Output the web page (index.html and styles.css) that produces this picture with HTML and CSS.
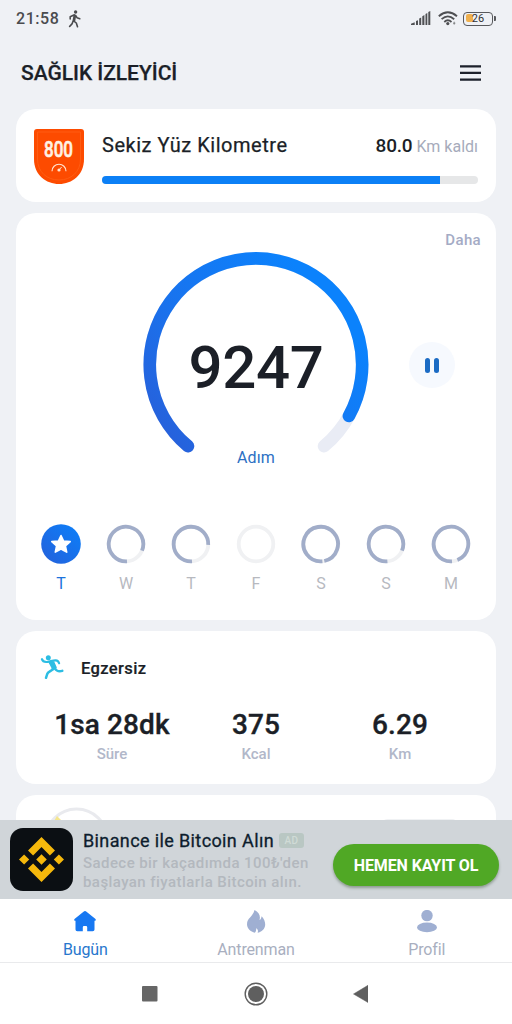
FILE: index.html
```html
<!DOCTYPE html>
<html lang="tr">
<head>
<meta charset="utf-8">
<title>Sağlık İzleyici</title>
<link rel="stylesheet" href="styles.css">
</head>
<body>
<div class="screen">
  <div class="status">
    <span class="clock">21:58</span>
    <svg class="walk" width="14" height="18" viewBox="0 0 14 18" fill="none" stroke="#4a4b4e" stroke-width="1.6" stroke-linecap="round" stroke-linejoin="round"><circle cx="7.6" cy="2" r="1.7" fill="#4a4b4e" stroke="none"/><path d="M2.2 9V6.7L6.4 4.8L5.3 10.6L8.3 13L9.5 16.7M5.2 10.8L4.2 13.6L1.6 16.5M7.6 5.4L9 7.7L11.8 8.7M7.3 5.5L6.6 10.5"/></svg>
    <svg class="signal" width="20" height="15" viewBox="0 0 20 15" fill="#4f5053"><path d="M0 14V12.7L3.7 11.3V14zM5 14V10.1L7 9.3V14zM8.2 14V7.5L10.2 6.5V14zM11.3 14V5.2L13.4 4V14zM14.5 14V3L16.3 1.9V14zM17.3 14V1L19.3 0V14z"/></svg>
    <svg class="wifi" width="20" height="15" viewBox="0 0 20 15" fill="none" stroke="#4f5053" stroke-width="1.8"><path d="M.8 5.2Q9.8-2.7 19 5.2M3.6 8.2Q9.8 2.6 16.2 8.2M6.3 11Q9.8 7.6 13.5 11"/><circle cx="9.8" cy="12.6" r="1.6" fill="#4f5053" stroke="none"/><path d="M16.2 10.7v3M15 12.2h2.4" stroke-width=".6"/></svg>
    <div class="battery"><i></i><span>26</span></div>
  </div>
  <header class="header">
    <h1>SAĞLIK İZLEYİCİ</h1>
    <svg width="22" height="17" viewBox="0 0 22 17" fill="#1d212b"><path d="M0 .2h21v2.3H0zM0 6.8h21v2.3H0zM0 13.4h21v2.3H0z"/></svg>
  </header>
  <main class="cards">
    <section class="card goal">
      <svg class="badge" width="50" height="55" viewBox="0 0 50 55"><path d="M3 0H47Q50 0 50 3V30C50 46 38 55 25 55S0 46 0 30V3Q0 0 3 0Z" fill="#fd4b00"/><path d="M3.5 3H46.5V30C46.5 43 37 51 25 51S3.5 43 3.5 30Z" fill="none" stroke="#ff5c12" stroke-width="1"/><text x="10" y="28.3" textLength="29" lengthAdjust="spacingAndGlyphs" class="badge-num">800</text><path d="M18 42.2A7 7 0 0 1 32 42.2" fill="none" stroke="#ffe5d0" stroke-width="1.1"/><circle cx="25" cy="41" r="1.6" fill="#ffe5d0"/><path d="M25 41l2.6-3" stroke="#ffe5d0"/></svg>
      <div class="goal-body">
        <div class="goal-line"><span class="goal-name">Sekiz Yüz Kilometre</span><span class="left"><b>80.0</b> Km kaldı</span></div>
        <div class="bar"><i></i></div>
      </div>
    </section>
    <section class="card steps">
      <div class="more">Daha</div>
      <div class="gauge-row">
        <div class="gauge">
          <svg width="226" height="226" viewBox="143 252 226 226" fill="none" stroke-width="12.6" stroke-linecap="round"><defs><linearGradient id="g" x1="155" y1="440" x2="325" y2="300" gradientUnits="userSpaceOnUse"><stop stop-color="#285fd9"/><stop offset=".45" stop-color="#1973ee"/><stop offset="1" stop-color="#0b82fc"/></linearGradient></defs><path d="M188 446.2A106.2 106.2 0 1 1 324 446.2" stroke="#e9ecf5"/><path d="M188 446.2A106.2 106.2 0 1 1 348.9 416" stroke="url(#g)"/></svg>
          <div class="count">9247</div>
          <div class="unit">Adım</div>
        </div>
        <div class="pause"><i></i><i></i></div>
      </div>
      <div class="week">
        <div class="day on"><svg width="40" height="40" viewBox="-20 -20 40 40"><defs><linearGradient id="d" x1="0" y1="1" x2="1" y2="0"><stop stop-color="#2560da"/><stop offset="1" stop-color="#0b80fa"/></linearGradient></defs><circle r="19.8" fill="url(#d)"/><path d="M0-8.5L2.6-3L9.2-2.4L4.4 2L5.7 8.1L0 5L-5.7 8.1L-4.4 2L-9.2-2.4L-2.6-3Z" fill="#fff" stroke="#fff" stroke-width="1.6" stroke-linejoin="round"/></svg><span>T</span></div>
        <div class="day"><svg width="40" height="40" viewBox="-20 -20 40 40"><circle class="track" r="17.3"/><path class="arc" d="M1 17.3A17.3 17.3 0 1 1 16 6.6"/></svg><span>W</span></div>
        <div class="day"><svg width="40" height="40" viewBox="-20 -20 40 40"><circle class="track" r="17.3"/><path class="arc" d="M1 17.3A17.3 17.3 0 1 1 17.2 .9"/></svg><span>T</span></div>
        <div class="day"><svg width="40" height="40" viewBox="-20 -20 40 40"><circle class="track" r="17.3"/></svg><span>F</span></div>
        <div class="day"><svg width="40" height="40" viewBox="-20 -20 40 40"><circle class="track" r="17.3"/><path class="arc" d="M1.4 17.3A17.3 17.3 0 1 1 3.3 17"/></svg><span>S</span></div>
        <div class="day"><svg width="40" height="40" viewBox="-20 -20 40 40"><circle class="track" r="17.3"/><path class="arc" d="M1.4 17.3A17.3 17.3 0 1 1 16 6.6"/></svg><span>S</span></div>
        <div class="day"><svg width="40" height="40" viewBox="-20 -20 40 40"><circle class="track" r="17.3"/><path class="arc" d="M1 17.3A17.3 17.3 0 1 1 6.4 16.1"/></svg><span>M</span></div>
      </div>
    </section>
    <section class="card exercise">
      <div class="ex-title"><svg width="24" height="25" viewBox="0 0 24 25" fill="none" stroke="#2cbde3" stroke-width="2.2" stroke-linecap="round" stroke-linejoin="round"><circle cx="8.3" cy="2.8" r="2.5" fill="#2cbde3" stroke="none"/><path d="M1.9 4.2C2.6 6.4 4.5 7.3 7.5 6.9C11 6.3 13 5.2 15.8 5.4C17.8 5.5 18.6 6.6 19.1 8.3"/><path d="M9.2 7.2L13.6 7L16 12.6L13.2 14.6Z" fill="#2cbde3" stroke-width="1.6"/><path d="M14.8 13.4C16.2 15.6 17.5 17.2 22.3 15.9M12.9 13.8C11.5 16.5 7.6 16.6 7.2 19.2L6 22.8" stroke-width="2.5"/></svg><h2>Egzersiz</h2></div>
      <div class="stats">
        <div><strong>1sa 28dk</strong><span>Süre</span></div>
        <div><strong>375</strong><span>Kcal</span></div>
        <div><strong>6.29</strong><span>Km</span></div>
      </div>
    </section>
    <section class="card next"><svg width="460" height="26" viewBox="26 794 460 26"><circle cx="76.5" cy="839" r="31" fill="none" stroke="#e9eaee" stroke-width="3"/><path d="M54 820l3-5 5 5z" fill="#f5e68c"/><path d="M194 819h2.4v1H194z" fill="#555a63"/><path d="M384 819q2-1 4-1h64q3 0 4 2h-73z" fill="#f0f2f4"/></svg></section>
  </main>
  <aside class="ad">
    <svg class="coin" width="63" height="63" viewBox="0 0 63 63"><rect width="63" height="63" rx="13" fill="#0b0f13"/><g fill="#f5b80c"><path d="M31.5 9L45 22.5L39.9 27.5L31.5 19.1L23.1 27.5L18 22.5ZM31.5 54L45 40.5L39.9 35.5L31.5 43.9L23.1 35.5L18 40.5ZM14.1 26.4L19.2 31.5L14.1 36.6L9 31.5ZM31.5 26.2L36.8 31.5L31.5 36.8L26.2 31.5ZM48.9 26.4L54 31.5L48.9 36.6L43.8 31.5Z"/></g></svg>
    <div class="ad-copy">
      <div class="ad-title">Binance ile Bitcoin Alın <em>AD</em></div>
      <p>Sadece bir kaçadımda 100₺'den<br>başlayan fiyatlarla Bitcoin alın.</p>
    </div>
    <div class="cta">HEMEN KAYIT OL</div>
  </aside>
  <nav class="tabs">
    <div class="tab active"><svg width="24" height="24" viewBox="0 0 24 24" fill="#1778f2"><path d="M10.5 1.7Q12 .4 13.5 1.7L22.5 9Q23.7 10.5 22 10.7H21.5V19.5Q21.5 21.3 19.7 21.3H14.2V17.2Q14.2 16 13 16H11Q9.8 16 9.8 17.2V21.3H4.3Q2.5 21.3 2.5 19.5V10.7H2Q.3 10.5 1.5 9Z"/></svg><span>Bugün</span></div>
    <div class="tab"><svg width="24" height="24" viewBox="0 0 24 24" fill="#9fafd2"><path d="M10.5 0C15 2.2 16.8 6 15.5 10C17 9.5 17.3 7.6 17.7 6.2C20 9 21.2 11.5 21.2 14.5C21.2 19 17.5 22 13.6 22.8C14.3 20.4 14 19.3 12 18.2C12.5 20 12 21.3 10.9 22.8C6.5 21.5 3 18.8 3 14.3C3 7.8 8.7 7.2 10.5 0ZM11 17.9H11.7V20H11Z"/></svg><span>Antrenman</span></div>
    <div class="tab"><svg width="24" height="24" viewBox="0 0 24 24" fill="#9fafd2"><circle cx="12" cy="5.6" r="5.7"/><ellipse cx="12" cy="17.4" rx="10" ry="4.8"/></svg><span>Profil</span></div>
  </nav>
  <div class="system">
    <svg width="16" height="16"><rect width="15.5" height="15.5" rx="1" fill="#666"/></svg>
    <svg width="24" height="24"><circle cx="12" cy="12" r="10.8" fill="none" stroke="#5f5f5f" stroke-width="1.4"/><circle cx="12" cy="12" r="8" fill="#5f5f5f"/></svg>
    <svg width="15" height="18"><path d="M.5 9L15 .3V17.5Z" fill="#5f5f5f" stroke="#5f5f5f" stroke-width=".5" stroke-linejoin="round"/></svg>
  </div>
</div>
</body>
</html>
```
FILE: styles.css
```css
* { box-sizing: border-box; margin: 0; }
body { background: #eff1f5; font-family: Roboto, "Noto Sans", sans-serif; color: #1b1f27; }
svg { display: block; flex: none; }
.screen { width: 512px; height: 1024px; display: flex; flex-direction: column; overflow: hidden; }
.status { height: 37px; flex: none; display: flex; align-items: center; padding: 0 17px 0 16px; }
.clock { font-size: 16px; font-weight: 500; letter-spacing: .55px; color: #4a4b4e; line-height: 20px; }
.walk { margin-left: 9px; }
.signal { margin-left: auto; }
.wifi { margin-left: 7px; }
.battery { position: relative; width: 30px; height: 14px; margin-left: 5px; margin-right: 2px; border: 1.5px solid #58595c; border-radius: 4px; display: flex; align-items: center; justify-content: center; }
.battery::after { content: ""; position: absolute; right: -4px; top: 3px; width: 2px; height: 5px; background: #58595c; border-radius: 0 1px 1px 0; }
.battery i { position: absolute; left: 1.5px; top: 1.5px; width: 7px; height: 8px; background: #efb04e; border-radius: 2px; }
.battery span { position: relative; font-size: 11px; line-height: 12px; color: #333; }
.header { height: 72px; flex: none; display: flex; align-items: center; justify-content: space-between; padding: 0 30px 0 21px; }
.header h1 { font-size: 21px; font-weight: 500; letter-spacing: -.04px; line-height: 26px; -webkit-text-stroke: .25px; }
.cards { height: 711px; flex: none; overflow: hidden; padding: 0 16px; display: flex; flex-direction: column; gap: 11px; }
.card { background: #fff; border-radius: 20px; flex: none; }
.goal { height: 93px; display: flex; padding: 20px 18px 0; }
.goal-body { flex: 1; margin-left: 18px; padding-top: 3px; }
.badge-num { font-size: 22px; font-weight: 500; fill: #fff2e4; stroke: #fff2e4; stroke-width: .6; }
.goal-line { display: flex; justify-content: space-between; align-items: baseline; line-height: 26px; height: 26px; }
.goal-name { font-size: 20px; letter-spacing: .53px; -webkit-text-stroke: .25px; }
.left { font-size: 16px; color: #a6abbb; }
.left b { font-size: 19px; font-weight: 500; letter-spacing: -.2px; color: #1b1f27; }
.bar { height: 8px; margin-top: 18px; border-radius: 4px; background: #e6e7e8; overflow: hidden; }
.bar i { display: block; width: 90%; height: 8px; background: #0c80f6; }
.steps { height: 407px; padding: 17px 15px 0; }
.more { text-align: right; font-size: 15px; line-height: 20px; font-weight: 500; letter-spacing: .35px; color: #a4abc5; }
.gauge-row { height: 226px; margin-top: 2px; display: grid; grid-template-columns: 1fr 226px 1fr; }
.gauge { grid-column: 2; display: grid; }
.gauge > * { grid-area: 1 / 1; }
.count { align-self: start; padding-top: 81px; text-align: center; font-size: 60px; font-weight: 500; line-height: 70px; letter-spacing: -.3px; }
.unit { align-self: start; padding-top: 195px; text-align: center; font-size: 16px; line-height: 22px; letter-spacing: .1px; color: #2c70c4; }
.pause { width: 46px; height: 46px; margin: 90px 0 0 40px; border-radius: 50%; background: #f6f9fe; display: flex; gap: 4px; align-items: center; justify-content: center; }
.pause i { width: 5px; height: 15px; border-radius: 3px; background: #1b6bc4; }
.week { display: flex; justify-content: space-between; padding: 0 10px; margin-top: 46px; }
.day { width: 40px; display: flex; flex-direction: column; align-items: center; gap: 9px; font-size: 16px; line-height: 21px; color: #b7b9bf; }
.day.on { color: #1c72dc; }
.track { fill: none; stroke: #f0f1f3; stroke-width: 3.8; }
.arc { fill: none; stroke: #a1adc9; stroke-width: 3.8; }
.exercise { height: 153px; padding-top: 23px; }
.ex-title { display: flex; align-items: center; padding-left: 24px; height: 27px; }
.ex-title h2 { font-size: 16.5px; font-weight: 500; letter-spacing: .38px; margin-left: 17px; padding-top: 2px; -webkit-text-stroke: .2px; }
.stats { display: grid; grid-template-columns: repeat(3, 144px); padding-left: 24px; margin-top: 26px; text-align: center; }
.stats strong { display: block; font-size: 28px; line-height: 36px; font-weight: 500; letter-spacing: .1px; -webkit-text-stroke: .35px; }
.stats span { display: block; font-size: 15px; font-weight: 500; line-height: 20px; margin-top: 1px; color: #b1b7c9; }
.next { height: 60px; padding-left: 10px; }
.ad { height: 79px; flex: none; background: #d0d5d9; display: flex; padding: 8px 13px 0 10px; }
.ad-copy { width: 250px; margin-left: 10px; white-space: nowrap; }
.ad-title { display: flex; align-items: center; gap: 5px; font-size: 18px; line-height: 25px; letter-spacing: .38px; color: #0d1d2d; -webkit-text-stroke: .3px; }
.ad-title em { font-style: normal; font-size: 10px; font-weight: 500; line-height: 15px; width: 25px; height: 15px; text-align: center; background: #b9c7c3; color: #d0dbd6; border-radius: 3px; -webkit-text-stroke: 0; }
.ad p { font-size: 15px; font-weight: 500; line-height: 19px; letter-spacing: .43px; padding-top: 1px; color: #b3b8be; }
.cta { width: 166px; height: 42px; margin-top: 16px; border-radius: 21px; background: #50a825; color: #fff; text-align: center; font-size: 16px; line-height: 43px; font-weight: 700; letter-spacing: -.1px; box-shadow: 0 2px 3px #8d9b90; }
.tabs { height: 64px; flex: none; background: #fff; border-bottom: 1px solid #e9eaec; display: grid; grid-template-columns: repeat(3, 1fr); }
.tab { display: flex; flex-direction: column; align-items: center; padding-top: 11px; gap: 5px; font-size: 16px; line-height: 21px; letter-spacing: -.15px; color: #a9afbf; }
.tab.active { color: #2877cd; }
.system { flex: 1; background: #fff; display: flex; align-items: center; justify-content: space-between; padding: 0 144px 0 142px; }
```
